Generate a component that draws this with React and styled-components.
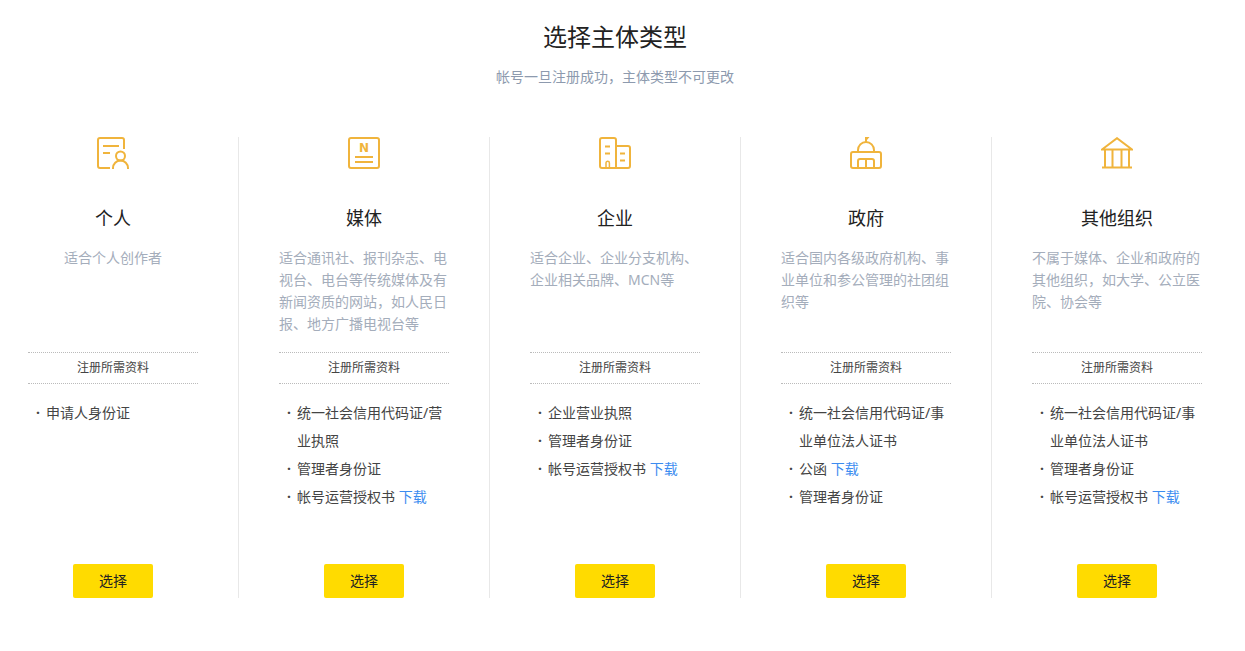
/* eslint-disable react/prop-types */
import styled, { createGlobalStyle } from 'styled-components';

const types = [
  {
    name: '个人',
    icon: PersonIcon,
    desc: '适合个人创作者',
    materials: [{ text: '申请人身份证' }],
  },
  {
    name: '媒体',
    icon: MediaIcon,
    desc: '适合通讯社、报刊杂志、电视台、电台等传统媒体及有新闻资质的网站，如人民日报、地方广播电视台等',
    materials: [
      { text: '统一社会信用代码证/营业执照' },
      { text: '管理者身份证' },
      { text: '帐号运营授权书', download: true },
    ],
  },
  {
    name: '企业',
    icon: CompanyIcon,
    desc: '适合企业、企业分支机构、企业相关品牌、MCN等',
    materials: [
      { text: '企业营业执照' },
      { text: '管理者身份证' },
      { text: '帐号运营授权书', download: true },
    ],
  },
  {
    name: '政府',
    icon: GovernmentIcon,
    desc: '适合国内各级政府机构、事业单位和参公管理的社团组织等',
    materials: [
      { text: '统一社会信用代码证/事业单位法人证书' },
      { text: '公函', download: true },
      { text: '管理者身份证' },
    ],
  },
  {
    name: '其他组织',
    icon: OrganizationIcon,
    desc: '不属于媒体、企业和政府的其他组织，如大学、公立医院、协会等',
    materials: [
      { text: '统一社会信用代码证/事业单位法人证书' },
      { text: '管理者身份证' },
      { text: '帐号运营授权书', download: true },
    ],
  },
];

function PersonIcon() {
  return (
    <Icon viewBox="0 0 32 32" aria-hidden="true">
      <path d="M13 31H3a2 2 0 0 1-2-2V3a2 2 0 0 1 2-2h22a2 2 0 0 1 2 2v9" />
      <path d="M6 9h16M6 16h7" />
      <circle cx="23.5" cy="19" r="4.5" />
      <path d="M16 32v-1a7.5 7.5 0 0 1 15 0v1" />
    </Icon>
  );
}

function MediaIcon() {
  return (
    <Icon viewBox="0 0 32 32" aria-hidden="true">
      <rect x="1" y="1" width="30" height="30" rx="2" />
      <IconLetter x="16" y="15" textAnchor="middle">
        N
      </IconLetter>
      <path d="M7 20h18M7 25h18" />
    </Icon>
  );
}

function CompanyIcon() {
  return (
    <Icon viewBox="0 0 32 32" aria-hidden="true">
      <path d="M17 31H3a2 2 0 0 1-2-2V3a2 2 0 0 1 2-2h12a2 2 0 0 1 2 2v28z" />
      <path d="M17 9h12a2 2 0 0 1 2 2v18a2 2 0 0 1-2 2H17" />
      <path d="M6 9.5h5M6 16.5h5M21 16.5h5M21 23.5h5" />
      <path d="M7 31v-5a1.7 1.7 0 0 1 3.4 0v5" strokeWidth="1.5" />
    </Icon>
  );
}

function GovernmentIcon() {
  return (
    <Icon viewBox="0 0 32 32" aria-hidden="true">
      <rect x="1" y="15" width="30" height="16" rx="2" />
      <path d="M8 15v-2a8 8 0 0 1 16 0v2" />
      <path d="M8 31v-7a2 2 0 0 1 2-2h12a2 2 0 0 1 2 2v7M16 22v9" />
      <path d="M15 0h4.5l-2.5 3v2h-2z" fill="#f0b43c" stroke="none" />
    </Icon>
  );
}

function OrganizationIcon() {
  return (
    <Icon viewBox="0 0 32 32" aria-hidden="true">
      <path d="M1 12.5L16 1.2l15 11.3z" />
      <path d="M4 13v17M11.5 13v17M20.5 13v17M28 13v17M1 30.5h30" />
    </Icon>
  );
}

function TypeColumn({ data }) {
  const TypeIcon = data.icon;
  return (
    <Column>
      <TypeIcon />
      <Name>{data.name}</Name>
      <Desc>{data.desc}</Desc>
      <MaterialTitle>注册所需资料</MaterialTitle>
      <MaterialList>
        {data.materials.map(({ text, download }) => (
          <Material key={text}>
            <span>
              {text}
              {download && (
                <>
                  {' '}
                  <DownloadLink href="#download">下载</DownloadLink>
                </>
              )}
            </span>
          </Material>
        ))}
      </MaterialList>
      <SelectButton type="button">选择</SelectButton>
    </Column>
  );
}

function App() {
  return (
    <Page>
      <GlobalStyle />
      <Title>选择主体类型</Title>
      <SubTitle>帐号一旦注册成功，主体类型不可更改</SubTitle>
      <Columns>
        {types.map((data) => (
          <TypeColumn key={data.name} data={data} />
        ))}
      </Columns>
    </Page>
  );
}
export default App;

const GlobalStyle = createGlobalStyle`
  body {
    margin: 0;
    background: #fff;
    color: #222;
    font-family: 'Noto Sans', 'Noto Sans CJK SC', sans-serif;
    font-size: 14px;
    font-weight: 400;
  }
`;
const Page = styled.main`
  padding: 19px 43px 52px 28px;
`;
const Title = styled.h1`
  margin: 0;
  font-size: 24px;
  font-weight: 400;
  line-height: 36px;
  text-align: center;
`;
const SubTitle = styled.p`
  margin: 11px 0 49px;
  line-height: 22px;
  text-align: center;
  color: #8d9aae;
`;
const Columns = styled.div`
  display: flex;
`;
const Column = styled.section`
  display: flex;
  flex: 1 1 0;
  flex-direction: column;
  align-items: center;
  padding: 0 40px;
  border-right: 1px solid #e8e8e8;
  &:first-child {
    padding-left: 0;
  }
  &:last-child {
    padding-right: 0;
    border-right: 0;
  }
`;
const Icon = styled.svg`
  width: 32px;
  height: 32px;
  fill: none;
  stroke: #f0b43c;
  stroke-width: 2;
`;
const IconLetter = styled.text`
  fill: #f0b43c;
  stroke: none;
  font-family: 'DejaVu Sans', sans-serif;
  font-size: 12px;
  font-weight: 700;
`;
const Name = styled.h2`
  margin: 36px 0 15px;
  font-size: 18px;
  font-weight: 400;
  line-height: 27px;
`;
const Desc = styled.p`
  min-height: 88px;
  margin: 0 0 17px;
  line-height: 22px;
  color: #a4adbb;
`;
const MaterialTitle = styled.h3`
  align-self: stretch;
  margin: 0;
  border-top: 1px dotted #bbb;
  border-bottom: 1px dotted #bbb;
  font-size: 12px;
  font-weight: 400;
  line-height: 30px;
  text-align: center;
  color: #444;
`;
const MaterialList = styled.ul`
  align-self: stretch;
  min-height: 112px;
  margin: 15px 0 53px;
  padding: 0 0 0 8px;
  list-style: none;
  color: #444;
`;
const Material = styled.li`
  display: flex;
  line-height: 28px;
  &::before {
    content: '·';
    flex: 0 0 10px;
    font-weight: 700;
  }
`;
const DownloadLink = styled.a`
  color: #3c8cf0;
  text-decoration: none;
`;
const SelectButton = styled.button`
  width: 80px;
  height: 34px;
  margin-top: auto;
  padding: 0 0 2px;
  border: 0;
  border-radius: 2px;
  background: #ffdb00;
  color: #222;
  font: inherit;
  cursor: pointer;
`;
